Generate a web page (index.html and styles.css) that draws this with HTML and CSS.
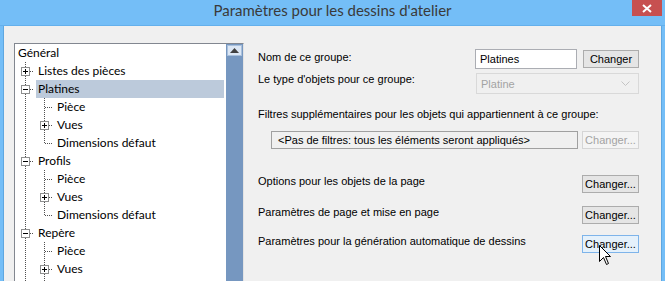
FILE: index.html
```html
<!DOCTYPE html>
<html lang="fr">
<head>
  <meta charset="UTF-8">
  <title>Paramètres pour les dessins d'atelier</title>
  <link rel="stylesheet" href="styles.css">
</head>
<body>
  <div class="window">
    <div class="titlebar">
      <span></span>
      <span class="title">Paramètres pour les dessins d'atelier</span>
      <span class="close-btn">
        <svg width="10" height="9" viewBox="0 0 10 9"><path d="M1 1 L9 8 M9 1 L1 8" stroke="#fff" stroke-width="2"/></svg>
      </span>
    </div>

    <div class="content">
      <!-- Tree of drawing groups -->
      <div class="tree">
        <div class="tree-items">
          <div class="node root"><span class="label">Général</span></div>
          <div class="node"><span class="cell tee"><svg class="exp" width="9" height="9" viewBox="0 0 9 9"><rect x="0.5" y="0.5" width="8" height="8" fill="#fff" stroke="#8e8f8f"/><path d="M2 4.5 H7 M4.5 2 V7" stroke="#000"/></svg></span><span class="label">Listes des pièces</span></div>
          <div class="node"><span class="cell tee"><svg class="exp" width="9" height="9" viewBox="0 0 9 9"><rect x="0.5" y="0.5" width="8" height="8" fill="#fff" stroke="#8e8f8f"/><path d="M2 4.5 H7" stroke="#000"/></svg></span><span class="label selected">Platines</span></div>
          <div class="node"><span class="cell pipe"></span><span class="cell tee"></span><span class="label">Pièce</span></div>
          <div class="node"><span class="cell pipe"></span><span class="cell tee"><svg class="exp" width="9" height="9" viewBox="0 0 9 9"><rect x="0.5" y="0.5" width="8" height="8" fill="#fff" stroke="#8e8f8f"/><path d="M2 4.5 H7 M4.5 2 V7" stroke="#000"/></svg></span><span class="label">Vues</span></div>
          <div class="node"><span class="cell pipe"></span><span class="cell elbow"></span><span class="label">Dimensions défaut</span></div>
          <div class="node"><span class="cell tee"><svg class="exp" width="9" height="9" viewBox="0 0 9 9"><rect x="0.5" y="0.5" width="8" height="8" fill="#fff" stroke="#8e8f8f"/><path d="M2 4.5 H7" stroke="#000"/></svg></span><span class="label">Profils</span></div>
          <div class="node"><span class="cell pipe"></span><span class="cell tee"></span><span class="label">Pièce</span></div>
          <div class="node"><span class="cell pipe"></span><span class="cell tee"><svg class="exp" width="9" height="9" viewBox="0 0 9 9"><rect x="0.5" y="0.5" width="8" height="8" fill="#fff" stroke="#8e8f8f"/><path d="M2 4.5 H7 M4.5 2 V7" stroke="#000"/></svg></span><span class="label">Vues</span></div>
          <div class="node"><span class="cell pipe"></span><span class="cell elbow"></span><span class="label">Dimensions défaut</span></div>
          <div class="node"><span class="cell tee"><svg class="exp" width="9" height="9" viewBox="0 0 9 9"><rect x="0.5" y="0.5" width="8" height="8" fill="#fff" stroke="#8e8f8f"/><path d="M2 4.5 H7" stroke="#000"/></svg></span><span class="label">Repère</span></div>
          <div class="node"><span class="cell pipe"></span><span class="cell tee"></span><span class="label">Pièce</span></div>
          <div class="node"><span class="cell pipe"></span><span class="cell tee"><svg class="exp" width="9" height="9" viewBox="0 0 9 9"><rect x="0.5" y="0.5" width="8" height="8" fill="#fff" stroke="#8e8f8f"/><path d="M2 4.5 H7 M4.5 2 V7" stroke="#000"/></svg></span><span class="label">Vues</span></div>
          <div class="node"><span class="cell pipe"></span><span class="cell pipe"></span></div>
        </div>
        <div class="scrollbar">
          <div class="sb-up">
            <svg width="9" height="5" viewBox="0 0 9 5"><path d="M0 5 L4.5 0 L9 5 Z" fill="#404040"/></svg>
          </div>
        </div>
      </div>

      <!-- Group settings -->
      <div class="settings">
        <div class="row row-name">
          <span class="text">Nom de ce groupe:</span>
          <span class="textbox">Platines</span>
          <button class="btn btn-short">Changer</button>
        </div>
        <div class="row row-type">
          <span class="text">Le type d'objets pour ce groupe:</span>
          <span class="combo">
            Platine
            <svg width="9" height="5" viewBox="0 0 9 5"><path d="M0.5 0.5 L4.5 4.5 L8.5 0.5" fill="none" stroke="#c4c4c4"/></svg>
          </span>
        </div>

        <div class="text filters-title">Filtres supplémentaires pour les objets qui appartiennent à ce groupe:</div>
        <div class="row row-filter">
          <span class="filter-box">&lt;Pas de filtres: tous les éléments seront appliqués&gt;</span>
          <button class="btn" disabled>Changer...</button>
        </div>

        <div class="row row-options">
          <span class="text">Options pour les objets de la page</span>
          <button class="btn">Changer...</button>
        </div>
        <div class="row row-page">
          <span class="text">Paramètres de page et mise en page</span>
          <button class="btn">Changer...</button>
        </div>
        <div class="row row-auto">
          <span class="text">Paramètres pour la génération automatique de dessins</span>
          <button class="btn hover">Changer...</button>
        </div>
      </div>
    </div>

    <!-- Mouse pointer over the last button -->
    <svg class="pointer" width="13" height="21" viewBox="0 0 13 21">
      <path d="M0.5 0.5 L0.5 16.5 L4.5 12.5 L7.5 19.5 L9.5 18.5 L6.5 11.5 L11.5 11.5 Z" fill="#fff" stroke="#000"/>
    </svg>
  </div>
</body>
</html>
```

FILE: styles.css
```css
body {
  margin: 0;
  font-family: 'Lato', 'Liberation Sans', sans-serif;
  font-size: 12px;
  color: #000;
  background-color: #74bef7;
  overflow: hidden;
}

.window {
  position: relative;
  width: 665px;
  height: 281px;
  overflow: hidden;
  background-color: #74bef7;
}

.titlebar {
  display: grid;
  grid-template-columns: 1fr auto 1fr;
  align-items: start;
  height: 25px;
  border-bottom: 1px solid #64b0ec;
}

.title {
  padding-top: 3px;
  font-size: 15px;
  line-height: 15px;
  color: #3a3a3a;
  white-space: nowrap;
}

.close-btn {
  justify-self: end;
  margin-right: 3px;
  width: 30px;
  height: 16px;
  background-color: #c75050;
  display: flex;
  align-items: center;
  justify-content: center;
}

.content {
  display: flex;
  align-items: flex-start;
  margin: 0 3px;
  height: 255px;
  padding: 17px 0 0 10px;
  background-color: #f0f0f0;
  border-left: 1px solid #5fa7e0;
  border-right: 1px solid #5fa7e0;
  box-sizing: border-box;
}

/* Tree view */
.tree {
  display: flex;
  width: 230px;
  height: 260px;
  border-top: 1px solid #828790;
  border-left: 1px solid #828790;
  border-right: 1px solid #e3e3e3;
  background-color: #fff;
  box-sizing: border-box;
  flex-shrink: 0;
}

.tree-items {
  flex: 1;
}

.node {
  display: flex;
  height: 18px;
  line-height: 18px;
}

.root .label {
  margin-left: 0;
  padding-left: 3px;
}

.cell {
  width: 19px;
  height: 18px;
  flex-shrink: 0;
}

.pipe {
  background: repeating-linear-gradient(to bottom, #505050 0 1px, transparent 1px 2px) 10px 0 / 1px 100% no-repeat;
}

.tee {
  background:
    repeating-linear-gradient(to right, #505050 0 1px, transparent 1px 2px) 11px 9px / 8px 1px no-repeat,
    repeating-linear-gradient(to bottom, #505050 0 1px, transparent 1px 2px) 10px 0 / 1px 100% no-repeat;
}

.elbow {
  background:
    repeating-linear-gradient(to right, #505050 0 1px, transparent 1px 2px) 11px 9px / 8px 1px no-repeat,
    repeating-linear-gradient(to bottom, #505050 0 1px, transparent 1px 2px) 10px 0 / 1px 10px no-repeat;
}

.exp {
  display: block;
  margin: 5px 0 0 6px;
}

.label {
  flex: 1;
  margin: 0 2px;
  padding-left: 2px;
  white-space: nowrap;
}

.label.selected {
  background-color: #bccadb;
}

.scrollbar {
  width: 17px;
  background-color: #7697c0;
}

.sb-up {
  margin: 1px 1px 0 1px;
  height: 11px;
  background-color: #dce7f5;
  border: 1px solid #a9c0dc;
  box-sizing: border-box;
  display: flex;
  align-items: center;
  justify-content: center;
}

/* Settings panel */
.settings {
  flex: 1;
  padding: 6px 24px 0 14px;
  font-family: 'Liberation Sans', Arial, sans-serif;
  font-size: 11px;
}

.row {
  display: flex;
  align-items: flex-start;
}

.text {
  flex: 1;
  line-height: 12px;
  white-space: nowrap;
}

.row-name .text {
  margin-top: 2px;
}

.textbox {
  width: 102px;
  height: 20px;
  padding-left: 4px;
  line-height: 18px;
  background-color: #fff;
  border: 1px solid #abadb3;
  box-sizing: border-box;
}

.btn {
  width: 57px;
  height: 18px;
  padding: 0;
  font-family: inherit;
  font-size: 11px;
  color: #000;
  background-color: #e5e5e5;
  border: 1px solid #acacac;
  box-sizing: border-box;
}

.btn-short {
  width: 56px;
  margin-left: 6px;
  margin-top: 1px;
}

.btn:disabled {
  color: #a3a3a3;
  background-color: #f4f4f4;
  border-color: #d5d5d5;
}

.btn.hover {
  background-color: #e5f1fb;
  border-color: #7eb4ea;
}

.row-type {
  margin-top: 4px;
}

.combo {
  width: 163px;
  height: 21px;
  padding: 0 8px 0 4px;
  display: flex;
  align-items: center;
  justify-content: space-between;
  color: #a3a3a3;
  border: 1px solid #d9d9d9;
  box-sizing: border-box;
}

.filters-title {
  margin-top: 14px;
}

.row-filter {
  margin-top: 11px;
  margin-left: 13px;
}

.filter-box {
  width: 307px;
  height: 18px;
  margin-right: 4px;
  padding-left: 6px;
  line-height: 16px;
  border: 1px solid #a0a0a0;
  box-sizing: border-box;
}

.row-options {
  margin-top: 26px;
}

.row-page {
  margin-top: 13px;
}

.row-auto {
  margin-top: 11px;
}

.pointer {
  position: absolute;
  left: 599px;
  top: 245px;
}
```
